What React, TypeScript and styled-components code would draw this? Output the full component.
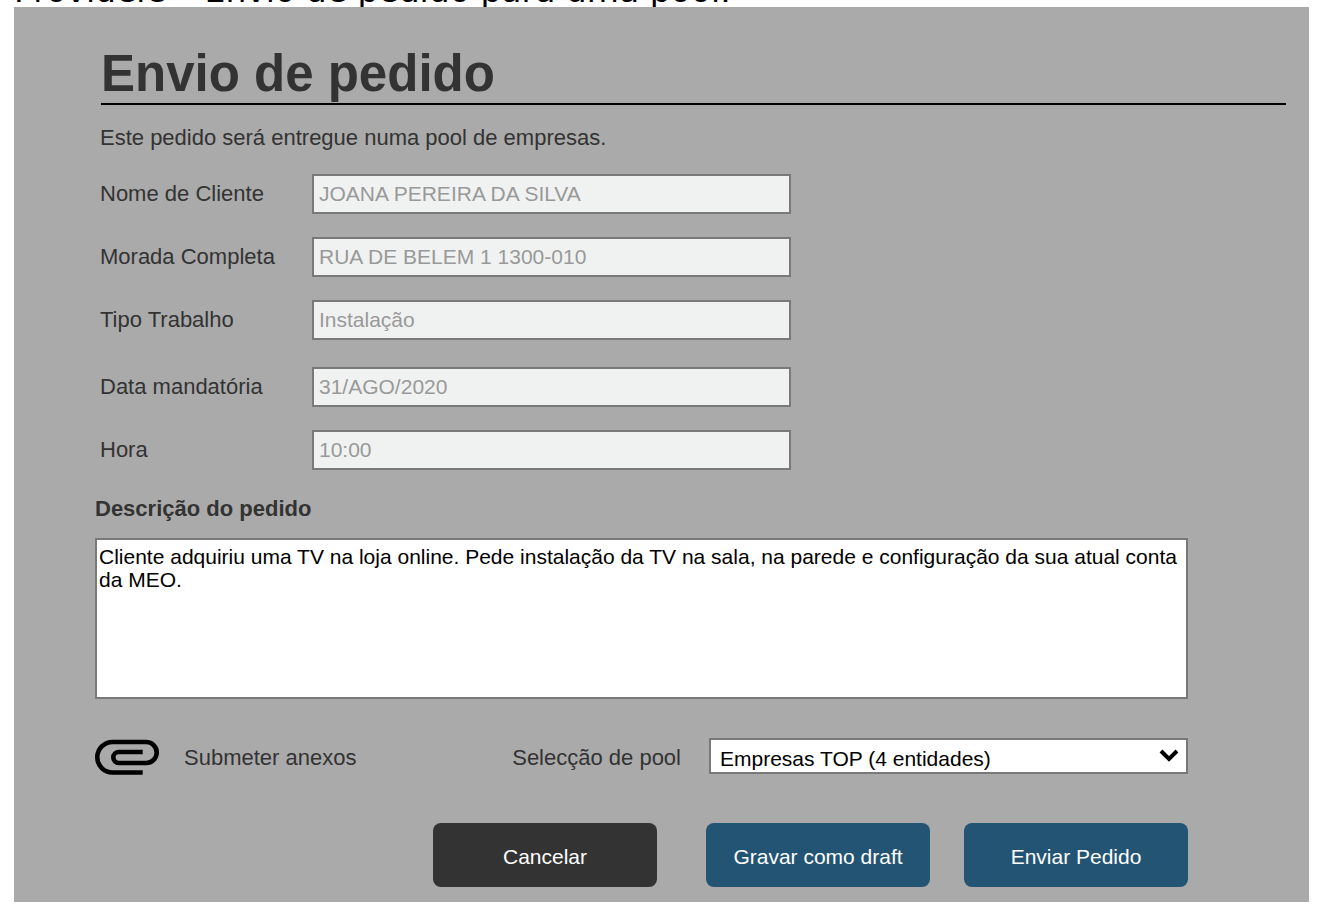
import React from "react";
import styled, { createGlobalStyle } from "styled-components";

const GlobalStyle = createGlobalStyle`
  *, *::before, *::after { box-sizing: border-box; }
  body {
    margin: 0;
    background: #fff;
    color: #333;
    font-family: "Liberation Sans", Arial, sans-serif;
    font-size: 22px;
    line-height: 26px;
  }
`;

const Page = styled.div`
  padding: 0 13px 14px 14px;
`;

const Caption = styled.header`
  display: flex;
  align-items: flex-end;
  height: 7px;
  overflow: hidden;
  color: #000;
  font-family: "DejaVu Sans", Verdana, sans-serif;
  font-size: 33px;
  line-height: 33px;
  white-space: nowrap;
`;

const Panel = styled.main`
  padding: 37px 23px 15px 81px;
  background: #aaa;
`;

const TitleBar = styled.div`
  margin-left: 6px;
  border-bottom: 2px solid #000;
`;

const Title = styled.h1`
  margin: 0;
  font-size: 51px;
  font-weight: 700;
  line-height: 59px;
`;

const Intro = styled.p`
  margin: 20px 0 23px 5px;
`;

const Form = styled.form`
  margin-right: 98px;
`;

const FieldGroup = styled.div`
  display: grid;
  gap: 23px;
  margin-bottom: 27px;
  padding-left: 5px;
`;

const Field = styled.div`
  display: grid;
  grid-template-columns: 212px minmax(0, 479px);
  align-items: center;
`;

const TextInput = styled.input`
  width: 100%;
  height: 40px;
  padding: 0 5px;
  border: 2px solid #797979;
  border-radius: 0;
  background: #f0f2f1;
  color: #999;
  font: 21px "Liberation Sans", Arial, sans-serif;
`;

const DescriptionLabel = styled.label`
  display: block;
  margin-bottom: 17px;
  font-weight: 700;
  line-height: 24px;
`;

const Description = styled.textarea`
  display: block;
  width: 100%;
  height: 161px;
  padding: 5px 2px;
  border: 2px solid #797979;
  border-radius: 0;
  background: #fff;
  color: #000;
  font: 21px/23px "Liberation Sans", Arial, sans-serif;
  resize: none;
`;

const Options = styled.div`
  display: flex;
  justify-content: space-between;
  align-items: center;
  height: 36px;
  margin: 39px 0 49px;
`;

const AttachButton = styled.button`
  display: flex;
  align-items: center;
  gap: 25px;
  padding: 0;
  border: 0;
  background: none;
  color: inherit;
  font: inherit;
`;

const OptionText = styled.span`
  display: block;
  padding-top: 3px;
`;

const PoolField = styled.div`
  display: flex;
  align-items: center;
  gap: 28px;
`;

const SelectBox = styled.div`
  position: relative;
  width: 479px;
`;

const Select = styled.select`
  display: block;
  width: 100%;
  height: 36px;
  padding: 4px 40px 0 9px;
  border: 2px solid #797979;
  border-radius: 0;
  appearance: none;
  background: #fff;
  color: #000;
  font: 21px "Liberation Sans", Arial, sans-serif;
`;

const Chevron = styled.svg`
  position: absolute;
  top: 10px;
  right: 9px;
  pointer-events: none;
`;

const Actions = styled.div`
  display: flex;
  justify-content: flex-end;
  gap: 34px;
`;

const Button = styled.button<{ $tone: string }>`
  width: 224px;
  height: 64px;
  padding: 3px 0 0;
  border: 0;
  border-radius: 8px;
  background: ${(p) => p.$tone};
  color: #fff;
  font: 21px "Liberation Sans", Arial, sans-serif;
`;

const CancelButton = styled(Button)`
  margin-right: 15px;
`;

const groups = [
  [
    { id: "nome", label: "Nome de Cliente", value: "JOANA PEREIRA DA SILVA" },
    { id: "morada", label: "Morada Completa", value: "RUA DE BELEM 1 1300-010" },
    { id: "tipo", label: "Tipo Trabalho", value: "Instalação" },
  ],
  [
    { id: "data", label: "Data mandatória", value: "31/AGO/2020" },
    { id: "hora", label: "Hora", value: "10:00" },
  ],
];

export default function App() {
  return (
    <>
      <GlobalStyle />
      <Page>
        <Caption>Providers – Envio de pedido para uma pool.</Caption>
        <Panel>
          <TitleBar>
            <Title>Envio de pedido</Title>
          </TitleBar>
          <Intro>Este pedido será entregue numa pool de empresas.</Intro>
          <Form onSubmit={(e) => e.preventDefault()}>
            {groups.map((fields) => (
              <FieldGroup key={fields[0].id}>
                {fields.map((f) => (
                  <Field key={f.id}>
                    <label htmlFor={f.id}>{f.label}</label>
                    <TextInput id={f.id} type="text" defaultValue={f.value} readOnly />
                  </Field>
                ))}
              </FieldGroup>
            ))}
            <DescriptionLabel htmlFor="descricao">Descrição do pedido</DescriptionLabel>
            <Description
              id="descricao"
              defaultValue="Cliente adquiriu uma TV na loja online. Pede instalação da TV na sala, na parede e configuração da sua atual conta da MEO."
            />
            <Options>
              <AttachButton type="button">
                <svg width="64" height="38" viewBox="0 0 64 38" fill="none" stroke="#000" strokeWidth="4.600" aria-hidden="true">
                  <path d="M47.700 35.500H17.550a15.250 15.250 0 0 1 0-30.500H51.200a10.500 10.500 0 0 1 0 21H23.800a5.500 5.500 0 0 1 0-11H47.700" />
                </svg>
                <OptionText>Submeter anexos</OptionText>
              </AttachButton>
              <PoolField>
                <OptionText as="label" htmlFor="pool">Selecção de pool</OptionText>
                <SelectBox>
                  <Select id="pool" defaultValue="top">
                    <option value="top">Empresas TOP (4 entidades)</option>
                  </Select>
                  <Chevron width="20" height="16" viewBox="0 0 20 16" fill="none" stroke="#000" strokeWidth="4" aria-hidden="true">
                    <path d="M2 3l8 8 8-8" />
                  </Chevron>
                </SelectBox>
              </PoolField>
            </Options>
            <Actions>
              <CancelButton $tone="#333" type="button">Cancelar</CancelButton>
              <Button $tone="#235474" type="button">Gravar como draft</Button>
              <Button $tone="#235474" type="submit">Enviar Pedido</Button>
            </Actions>
          </Form>
        </Panel>
      </Page>
    </>
  );
}
